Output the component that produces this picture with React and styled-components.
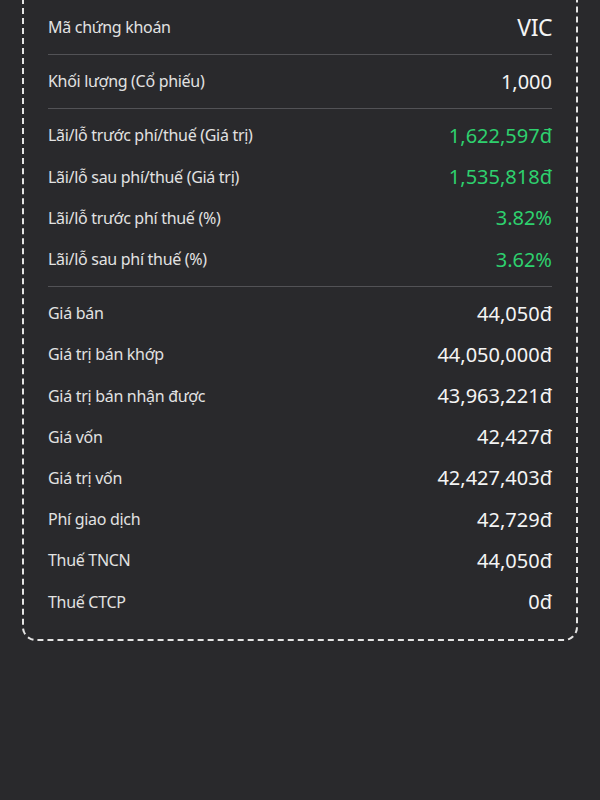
import React from "react";
import styled, { createGlobalStyle } from "styled-components";

const GlobalStyle = createGlobalStyle`
  html, body {
    margin: 0;
    padding: 0;
    background-color: #29292c;
  }
  body {
    font-family: "Noto Sans", "Open Sans", sans-serif;
    overflow: hidden;
  }
`;

const SECTIONS = [
  [{ label: "Mã chứng khoán", value: "VIC", big: true }],
  [{ label: "Khối lượng (Cổ phiếu)", value: "1,000" }],
  [
    { label: "Lãi/lỗ trước phí/thuế (Giá trị)", value: "1,622,597đ", up: true },
    { label: "Lãi/lỗ sau phí/thuế (Giá trị)", value: "1,535,818đ", up: true },
    { label: "Lãi/lỗ trước phí thuế (%)", value: "3.82%", up: true },
    { label: "Lãi/lỗ sau phí thuế (%)", value: "3.62%", up: true },
  ],
  [
    { label: "Giá bán", value: "44,050đ" },
    { label: "Giá trị bán khớp", value: "44,050,000đ" },
    { label: "Giá trị bán nhận được", value: "43,963,221đ" },
    { label: "Giá vốn", value: "42,427đ" },
    { label: "Giá trị vốn", value: "42,427,403đ" },
    { label: "Phí giao dịch", value: "42,729đ" },
    { label: "Thuế TNCN", value: "44,050đ" },
    { label: "Thuế CTCP", value: "0đ" },
  ],
];

const App = () => {
  return (
    <Page>
      <GlobalStyle />
      <Card>
        {SECTIONS.map((rows, i) => (
          <React.Fragment key={i}>
            {i > 0 && <Divider />}
            {rows.map((row) => (
              <Row key={row.label}>
                <Label>{row.label}</Label>
                <Value $big={row.big} $up={row.up}>
                  {row.value}
                </Value>
              </Row>
            ))}
          </React.Fragment>
        ))}
      </Card>
    </Page>
  );
};

const Page = styled.div`
  min-height: 100vh;
  background-color: #29292c;
  padding: 0 22px;
  box-sizing: border-box;
`;

const Card = styled.div`
  margin-top: -30px;
  padding: 34.5px 24px 17px;
  border: 2px dashed #e4e4e4;
  border-radius: 14px;
  display: flex;
  flex-direction: column;
`;

const Row = styled.div`
  height: 41.2px;
  display: flex;
  align-items: center;
  justify-content: space-between;
`;

const Label = styled.span`
  font-size: 16px;
  letter-spacing: -0.3px;
  color: #e2e2e2;
`;

const Value = styled.span`
  font-size: ${(p) => (p.$big ? "23px" : "20px")};
  letter-spacing: ${(p) => (p.$big ? "-0.5px" : "0")};
  color: ${(p) => (p.$up ? "#2ed06e" : "#f4f4f4")};
`;

const Divider = styled.div`
  height: 1.5px;
  margin: 6px 0 5.5px;
  background-color: #525256;
`;

export default App;
